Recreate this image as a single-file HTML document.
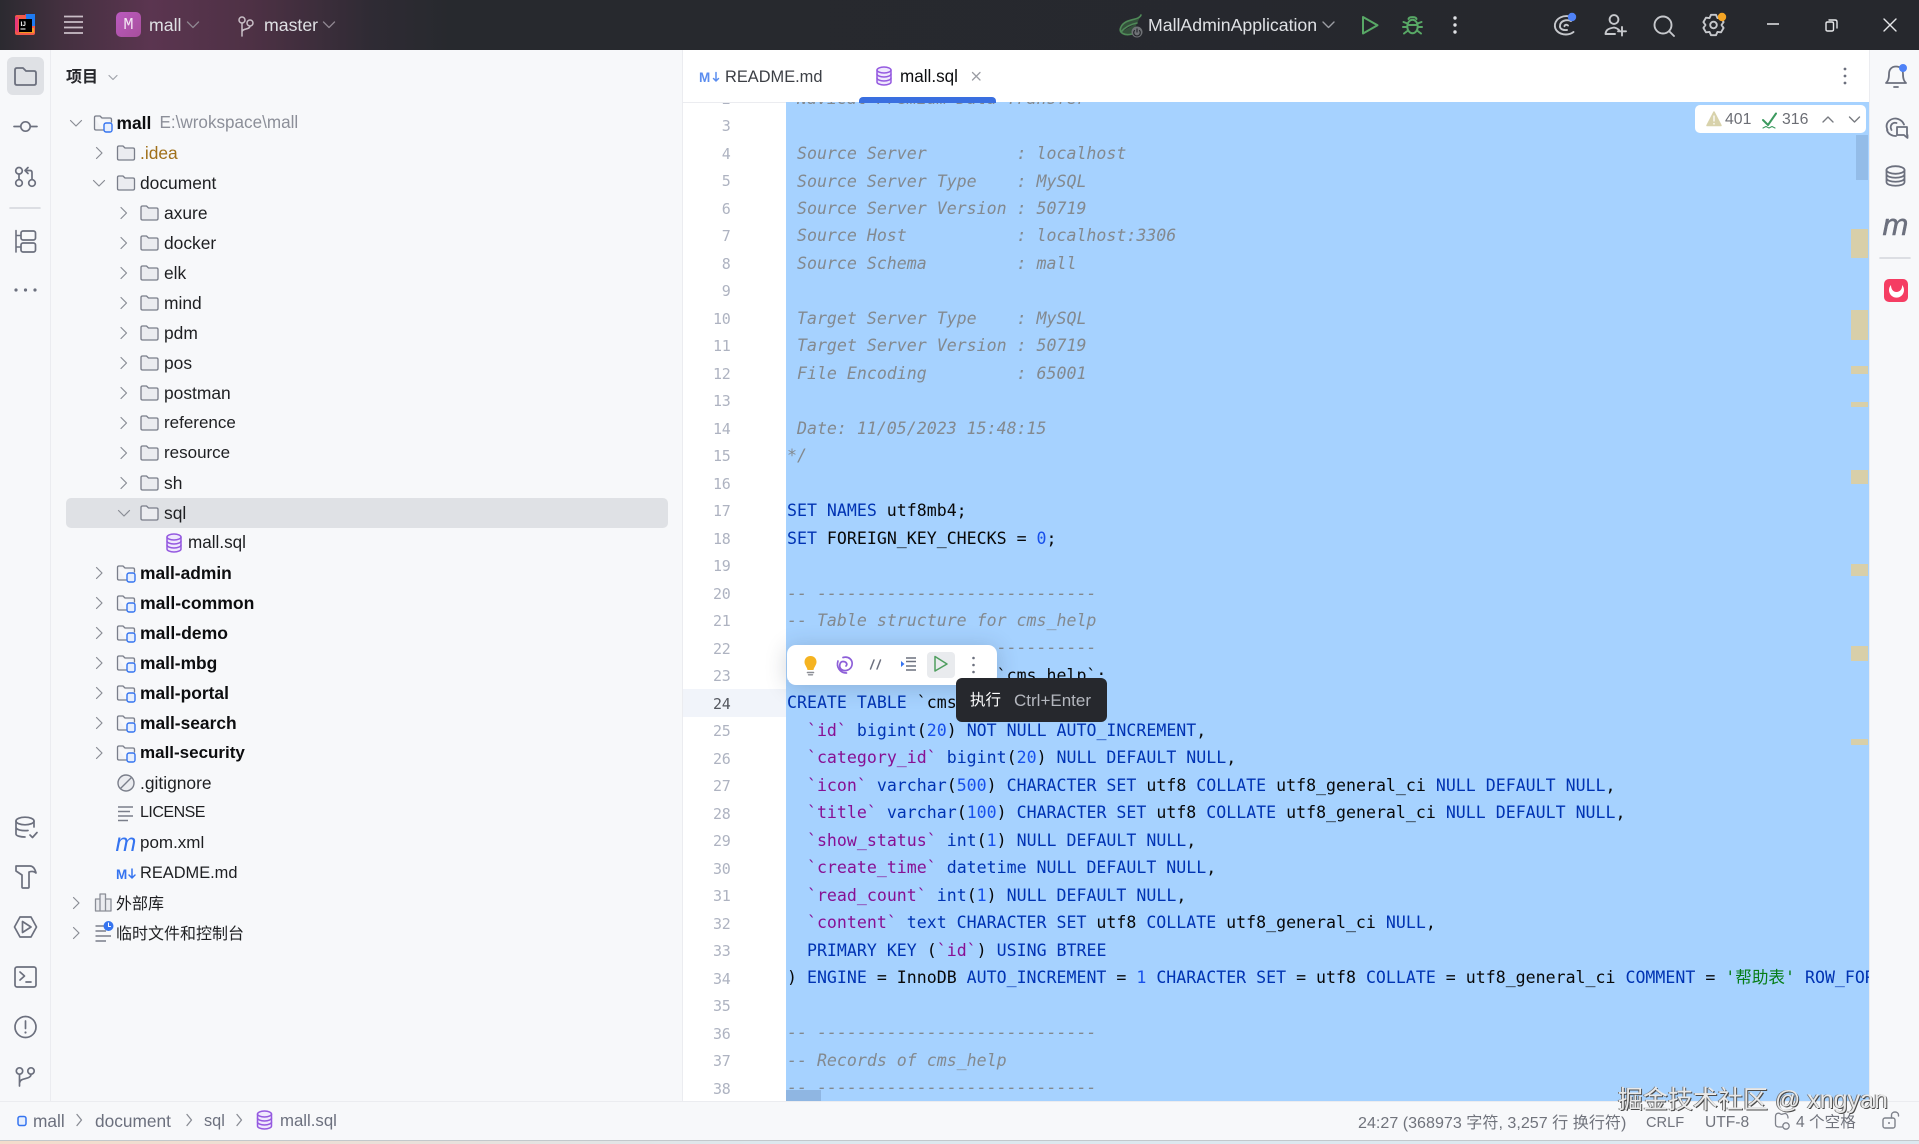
<!DOCTYPE html>
<html lang="zh"><head><meta charset="utf-8"><title>mall</title>
<style>
*{margin:0;padding:0;box-sizing:border-box}
html,body{width:1919px;height:1144px;overflow:hidden;background:#fff;font-family:"Liberation Sans","Noto Sans CJK SC",sans-serif}
.a{position:absolute}
#title{left:0;top:0;width:1919px;height:50px;background:linear-gradient(90deg,#2b2a30 0,#43303f 60px,#5b3550 150px,#4e3145 250px,#2f2b34 370px,#27292e 450px,#26282d 100%)}
.tt{position:absolute;top:0;line-height:50px;font-size:17.7px;color:#dfe1e5;white-space:nowrap}
#tile{left:116px;top:12px;width:25px;height:25px;border-radius:5px;background:linear-gradient(135deg,#bb5abf,#a74f9c);color:#f3e6f3;font:17px/27px "Liberation Mono",monospace;text-align:center}
#ls{left:0;top:50px;width:51px;height:1051px;background:#f7f8fa;border-right:1px solid #ebecf0}
#rs{left:1869px;top:50px;width:50px;height:1051px;background:#f7f8fa;border-left:1px solid #ebecf0}
#tree{left:51px;top:50px;width:632px;height:1051px;background:#f7f8fa;border-right:1px solid #ebecf0}
#tabs{left:683px;top:50px;width:1186px;height:53px;background:#fff;border-bottom:1px solid #ebecf0}
.r{position:absolute;line-height:30px;height:30px;font-size:17.4px;color:#1e1f22;white-space:nowrap}
.r.b{font-weight:700;font-size:17.4px;color:#0c0d0f}
.r .c{font-size:16px}
#gut{left:683px;top:103px;width:103px;height:998px;background:#fff;overflow:hidden}
#cur{left:683px;top:689px;width:103px;height:28px;background:#f1f4fa}
#nums{position:absolute;left:0;top:-17.3px;width:47.5px;text-align:right;font:15px/27.5px "DejaVu Sans Mono",monospace;letter-spacing:-.3px;color:#aeb3c1;white-space:pre}
#ed{left:786px;top:102px;width:1083px;height:999px;background:#a6d2ff;overflow:hidden}
#code{position:absolute;left:1px;top:-16.9px;font:16.58px/27.47px "DejaVu Sans Mono","Noto Sans CJK SC",monospace;color:#080808;white-space:pre}
#code b{color:#0033b3;font-weight:400}
#code u{color:#871094;text-decoration:none}
#code s{color:#1750eb;text-decoration:none}
#code em{color:#067d17;font-style:normal}
#code i{color:#83898f;font-style:italic}
.mk{position:absolute;left:1851px;width:17px;background:#d8cfa9}
#pop{left:787px;top:645px;width:210px;height:40px;background:#fff;border-radius:9px;box-shadow:0 2px 22px rgba(40,50,70,.22)}
#playbg{left:927px;top:652px;width:28px;height:26px;border-radius:4px;background:#e9ebee}
#tip{left:956px;top:678px;width:151px;height:44px;border-radius:6px;background:#26282d;color:#fff;font-size:15.5px;line-height:46px;z-index:5;white-space:nowrap}
#badge{left:1695px;top:105px;width:171px;height:28px;background:#fff;border-radius:5px;font-size:15.8px;color:#6c6e75;line-height:30px}
#st{left:0;top:1101px;width:1919px;height:39px;background:#f7f8fa;border-top:1px solid #ebecf0}
.s{position:absolute;top:1102px;line-height:38px;font-size:17.3px;color:#6c707e;white-space:nowrap}
.q{position:absolute;top:1104px;line-height:38px;font-size:15.6px;color:#70737c;white-space:nowrap}
#bot{left:0;top:1140px;width:1919px;height:4px;background:linear-gradient(90deg,#f4dccb 0,#eadfd8 20%,#dce8ee 40%,#dce9f0 100%);border-top:1px solid #c3c8cc}
#wm{left:1618px;top:1083px;font-size:25px;line-height:34px;color:#e9e9e9;text-shadow:1px 1px 0 #4a4a4a,-1px 0 0 #777;white-space:nowrap;z-index:9}
svg#ov{position:absolute;left:0;top:0;z-index:3}
</style></head><body>

<div class="a" id="title"></div>
<div class="a" id="tile">M</div>
<div class="tt" style="left:149px">mall</div>
<div class="tt" style="left:264px">master</div>
<div class="tt" style="left:1148px">MallAdminApplication</div>

<div class="a" id="ls"></div>
<div class="a" id="rs"></div>
<div class="a" id="tree"></div>
<div class="a" style="left:66px;top:498px;width:602px;height:30px;border-radius:5px;background:#dfe1e5"></div>

<div class="r" style="left:66px;top:63px;font-size:16px;font-weight:700;color:#26272b">项目</div>
<div class="r b" style="left:116.5px;top:108px">mall</div>
<div class="r" style="left:159.5px;top:108px;color:#8c8f99;font-size:17.1px">E:\wrokspace\mall</div>
<div class="r" style="left:140px;top:138px;color:#a0701a">.idea</div>
<div class="r" style="left:140px;top:168px">document</div>
<div class="r" style="left:164px;top:198px">axure</div>
<div class="r" style="left:164px;top:228px">docker</div>
<div class="r" style="left:164px;top:258px">elk</div>
<div class="r" style="left:164px;top:288px">mind</div>
<div class="r" style="left:164px;top:318px">pdm</div>
<div class="r" style="left:164px;top:348px">pos</div>
<div class="r" style="left:164px;top:378px">postman</div>
<div class="r" style="left:164px;top:408px;font-size:17px">reference</div>
<div class="r" style="left:164px;top:438px;font-size:17px">resource</div>
<div class="r" style="left:164px;top:468px">sh</div>
<div class="r" style="left:164px;top:498px">sql</div>
<div class="r" style="left:188px;top:528px;font-size:17.1px">mall.sql</div>
<div class="r b" style="left:140px;top:558px">mall-admin</div>
<div class="r b" style="left:140px;top:588px;font-size:17.6px">mall-common</div>
<div class="r b" style="left:140px;top:618px;font-size:17.6px">mall-demo</div>
<div class="r b" style="left:140px;top:648px">mall-mbg</div>
<div class="r b" style="left:140px;top:678px">mall-portal</div>
<div class="r b" style="left:140px;top:708px">mall-search</div>
<div class="r b" style="left:140px;top:738px;font-size:17px">mall-security</div>
<div class="r" style="left:140px;top:768px">.gitignore</div>
<div class="r" style="left:140px;top:798px;font-size:16px;letter-spacing:-.5px">LICENSE</div>
<div class="r" style="left:140px;top:828px;font-size:17px">pom.xml</div>
<div class="r" style="left:140px;top:858px;font-size:16.4px">README.md</div>
<div class="r" style="left:116px;top:888px"><span class="c">外部库</span></div>
<div class="r" style="left:116px;top:918px"><span class="c">临时文件和控制台</span></div>

<div class="a" id="tabs"></div>
<div class="r" style="left:725px;top:62px;color:#3c3f45;font-size:16.4px">README.md</div>
<div class="r" style="left:900px;top:62px;color:#0c0d0f;font-size:17.1px">mall.sql</div>
<div class="a" style="left:859px;top:97px;width:137px;height:6px;border-radius:4px 4px 0 0;background:#3a6fe0;z-index:2"></div>

<div class="a" id="gut"></div>
<div class="a" id="cur"></div>
<div class="a" style="left:683px;top:103px;width:103px;height:998px;overflow:hidden"><div id="nums">2
3
4
5
6
7
8
9
10
11
12
13
14
15
16
17
18
19
20
21
22
23
<span style="color:#54575f">24</span>
25
26
27
28
29
30
31
32
33
34
35
36
37
38</div></div>

<div class="a" id="ed"><div id="code"><i> Navicat Premium Data Transfer</i>

<i> Source Server         : localhost</i>
<i> Source Server Type    : MySQL</i>
<i> Source Server Version : 50719</i>
<i> Source Host           : localhost:3306</i>
<i> Source Schema         : mall</i>

<i> Target Server Type    : MySQL</i>
<i> Target Server Version : 50719</i>
<i> File Encoding         : 65001</i>

<i> Date: 11/05/2023 15:48:15</i>
<i>*/</i>

<b>SET NAMES</b> utf8mb4;
<b>SET</b> FOREIGN_KEY_CHECKS = <s>0</s>;

<i>-- ----------------------------</i>
<i>-- Table structure for cms_help</i>
<i>-- ----------------------------</i>
<b>DROP TABLE IF EXISTS</b> `cms_help`;
<b>CREATE TABLE</b> `cms_help`  (
  <u>`id`</u> <b>bigint</b>(<s>20</s>) <b>NOT NULL AUTO_INCREMENT</b>,
  <u>`category_id`</u> <b>bigint</b>(<s>20</s>) <b>NULL DEFAULT NULL</b>,
  <u>`icon`</u> <b>varchar</b>(<s>500</s>) <b>CHARACTER SET</b> utf8 <b>COLLATE</b> utf8_general_ci <b>NULL DEFAULT NULL</b>,
  <u>`title`</u> <b>varchar</b>(<s>100</s>) <b>CHARACTER SET</b> utf8 <b>COLLATE</b> utf8_general_ci <b>NULL DEFAULT NULL</b>,
  <u>`show_status`</u> <b>int</b>(<s>1</s>) <b>NULL DEFAULT NULL</b>,
  <u>`create_time`</u> <b>datetime NULL DEFAULT NULL</b>,
  <u>`read_count`</u> <b>int</b>(<s>1</s>) <b>NULL DEFAULT NULL</b>,
  <u>`content`</u> <b>text CHARACTER SET</b> utf8 <b>COLLATE</b> utf8_general_ci <b>NULL</b>,
  <b>PRIMARY KEY</b> (<u>`id`</u>) <b>USING BTREE</b>
) <b>ENGINE</b> = InnoDB <b>AUTO_INCREMENT</b> = <s>1</s> <b>CHARACTER SET</b> = utf8 <b>COLLATE</b> = utf8_general_ci <b>COMMENT</b> = <em>'帮助表'</em> <b>ROW_FORMAT</b> = Dynamic;

<i>-- ----------------------------</i>
<i>-- Records of cms_help</i>
<i>-- ----------------------------</i></div></div>

<div class="mk" style="top:229px;height:29px"></div>
<div class="mk" style="top:310px;height:30px"></div>
<div class="mk" style="top:366px;height:8px"></div>
<div class="mk" style="top:402px;height:5px"></div>
<div class="mk" style="top:470px;height:14px"></div>
<div class="mk" style="top:564px;height:12px"></div>
<div class="mk" style="top:646px;height:15px"></div>
<div class="mk" style="top:739px;height:6px"></div>
<div class="a" style="left:1856px;top:135px;width:12px;height:45px;background:#93bce8"></div>
<div class="a" style="left:786px;top:1090px;width:35px;height:11px;background:#8fb6e2"></div>

<div class="a" id="badge">
<span class="a" style="left:30px">401</span><span class="a" style="left:87px">316</span>
</div>

<div class="a" id="pop"></div>
<div class="a" id="playbg"></div>
<div class="a" id="tip"><span class="a" style="left:14px;font-size:15.5px">执行</span><span class="a" style="left:58px;color:#b4b7be;font-size:17px">Ctrl+Enter</span></div>

<div class="a" id="st"></div>
<div class="s" style="left:33px">mall</div>
<div class="s" style="left:95px">document</div>
<div class="s" style="left:204px;font-size:16.3px">sql</div>
<div class="s" style="left:280px;font-size:16.8px">mall.sql</div>
<div class="q" style="left:1358px;font-size:16.1px">24:27 (368973 字符, 3,257 行 换行符)</div>
<div class="q" style="left:1646px;font-size:14.6px">CRLF</div>
<div class="q" style="left:1705px">UTF-8</div>
<div class="q" style="left:1796px">4 个空格</div>
<div class="a" id="bot"></div>
<div class="a" id="wm">掘金技术社区 @ xngyan</div>

<svg id="ov" width="1919" height="1144" viewBox="0 0 1919 1144" fill="none" stroke-linecap="round" stroke-linejoin="round">
<defs>
<g id="f"><path d="M-8.5-5.5Q-8.5-7-7-7H-3L-1-5H7Q8.5-5 8.5-3.5V5.5Q8.5 7 7 7H-7Q-8.5 7-8.5 5.5Z" fill="#ebecf0" stroke="#7a7e8a" stroke-width="1.3"/></g>
<g id="m"><path d="M-8.5-5.5Q-8.5-7-7-7H-3L-1-5H7Q8.5-5 8.5-3.5V-1M0 7H-7Q-8.5 7-8.5 5.5V-5.5" fill="#f1f2f5" stroke="#7a7e8a" stroke-width="1.3"/><rect x="1" y="0" width="8" height="9" rx="2" fill="#e7effd" stroke="#3574f0" stroke-width="1.4"/></g>
<path id="cr" d="M-2.5-5.5L3 0L-2.5 5.5" stroke="#8a8d95" stroke-width="1.2"/>
<path id="cd" d="M-5.5-2.5L0 3L5.5-2.5" stroke="#8a8d95" stroke-width="1.2"/>
<g id="db" fill="#efe8fd" stroke="#955ae0" stroke-width="1.5"><path d="M-7-6V6A7 3 0 0 0 7 6V-6"/><ellipse cx="0" cy="-6" rx="7" ry="3"/><path d="M-7-2A7 3 0 0 0 7-2M-7 2A7 3 0 0 0 7 2" fill="none"/></g>
</defs>

<!-- title bar left -->
<g>
<rect x="15" y="15" width="20" height="20" rx="2" fill="#f15a4a"/><path d="M15 30V17H18V33ZM25 14H34V24H30Z" fill="#e8387a"/><path d="M26 14H35V26H26Z" fill="#1f7bf2"/><path d="M20 33H34V28H20Z" fill="#f49b22"/>
<rect x="19" y="19" width="13" height="13" fill="#000"/>
<text x="20.5" y="26" font-family="Liberation Sans" font-size="6.5" font-weight="700" fill="#fff">IJ</text><rect x="20.5" y="28.5" width="5" height="1" fill="#fff"/>
<path d="M64 16.500H83M64 22H83M64 27.500H83M64 33H83" stroke="#c9bdc6" stroke-width="1.800" stroke-linecap="butt"/>
<g stroke="#c9bfc7" stroke-width="1.5"><circle cx="242" cy="20" r="3"/><circle cx="250" cy="23" r="3"/><path d="M242 23V36M250 26C250 30 242 28 242 32"/></g>
<path d="M323.5 22L329 27.5L334.5 22M187.5 22L193 27.5L198.5 22" stroke="#8f8690" stroke-width="1.300"/>
</g>
<!-- title bar right -->
<g>
<path d="M1141 15C1139 21 1125 18 1121 27C1118 33 1125 36 1132 34M1121 32C1126 26 1132 24 1137 23" stroke="#4f8a58" stroke-width="1.6" fill="#34503b"/>
<circle cx="1137" cy="32" r="5.5" fill="#6f7276"/><path d="M1137 29V32M1134.5 30.5A3.3 3.3 0 1 0 1139.5 30.5" stroke="#25272c" stroke-width="1.2"/>
<path d="M1323 22L1328.5 27.5L1334 22" stroke="#9b9da3" stroke-width="1.4"/>
<path d="M1363 17V33.5L1377.5 25.3Z" stroke="#58a866" stroke-width="2"/>
<g stroke="#58a866" stroke-width="2"><ellipse cx="1412.5" cy="26.5" rx="5.2" ry="6.8"/><path d="M1408.5 19C1409 16.5 1416 16.5 1416.5 19M1403.5 22L1407.5 23.5M1421.5 22L1417.5 23.5M1403 27H1407M1422 27H1418M1404 33.5L1408 30.5M1421 33.5L1417 30.5M1408 25H1417"/></g>
<g fill="#dfe1e5"><circle cx="1455" cy="18" r="1.7"/><circle cx="1455" cy="25" r="1.7"/><circle cx="1455" cy="32" r="1.7"/></g>
<g stroke="#c6c8cc" stroke-width="1.9">
<path d="M1570 16.500C1563 15 1556.500 18 1555 24C1554 30 1559 34.500 1566 34.500C1569 34.500 1571.500 33.500 1573.500 32M1571 21C1566 19 1560.500 21 1560 25.500C1559.500 29 1563 30.500 1567 30M1568 25.500C1566 24 1564.500 25 1564.500 26.300"/>
<circle cx="1614" cy="19.5" r="4.4"/><path d="M1605.500 34C1606 30 1608 28.500 1614 27.500C1617 28 1618 29 1619 30M1606 34H1615M1622 27V35.500M1618 31.300H1626"/>
<circle cx="1663" cy="25" r="8.5"/><path d="M1669.500 31.500L1674 36"/>
<g transform="translate(1713.500 25)"><path d="M-2.500-10.200H2.500L4-6.900L7.550-7.300L10.100-2.900L8 0L10.100 2.900L7.550 7.300L4 6.900L2.500 10.200H-2.500L-4 6.900L-7.550 7.300L-10.100 2.900L-8 0L-10.100-2.900L-7.550-7.300L-4-6.900Z"/><circle cx="0" cy="0" r="3.300"/></g>
</g>
<circle cx="1572" cy="17" r="4.2" fill="#4f82f7"/>
<circle cx="1722" cy="17" r="4.2" fill="#f5a524"/>
<path d="M1767 24H1779" stroke="#e6e7ea" stroke-width="1.5" stroke-linecap="butt"/>
<path d="M1826 23.5Q1826 22 1827.5 22H1832Q1833.5 22 1833.5 23.5V29.5Q1833.5 31 1832 31H1827.5Q1826 31 1826 29.5ZM1829 20H1835Q1837 20 1837 22V28" stroke="#e6e7ea" stroke-width="1.4"/>
<path d="M1884 19L1896 31M1896 19L1884 31" stroke="#e6e7ea" stroke-width="1.4"/>
</g>

<!-- left strip -->
<rect x="7" y="57" width="37" height="38" rx="6" fill="#dfe1e5"/>
<path d="M15 70Q15 68 17 68H23L26 71H34Q36 71 36 73V83Q36 85 34 85H17Q15 85 15 83Z" stroke="#6c707e" stroke-width="1.8"/>
<g stroke="#6c707e" stroke-width="1.7">
<circle cx="25.500" cy="126.500" r="4.700"/><path d="M14 126.500H20.700M30.300 126.500H37"/>
<circle cx="19" cy="170.800" r="3.300"/><circle cx="19" cy="183" r="3.300"/><circle cx="32" cy="183" r="3.300"/>
<path d="M19 174.100V179.700M32 179.700V172.500Q32 170.500 30 170.500H25.500M28 167.500L25 170.500L28 173.500"/>
<path d="M16 230.500V252M16 235.500H20M16 247H20" stroke-width="1.6"/><rect x="21" y="231" width="14.500" height="9" rx="2"/><rect x="21" y="243" width="14.500" height="9" rx="2"/>
</g>
<path d="M10 208H40" stroke="#d3d5db" stroke-width="1.6"/>
<g fill="#6c707e"><circle cx="16" cy="290" r="1.600"/><circle cx="25.500" cy="290" r="1.600"/><circle cx="35" cy="290" r="1.600"/></g>
<g stroke="#6c707e" stroke-width="1.7">
<ellipse cx="25" cy="821" rx="9" ry="3.800"/><path d="M16 821V834C16 836 21 837 25 837M34 821V827M16 827C16 830 22 831 28 830.500M30 835L32.500 837.500L37 832.500"/>
<path d="M16 866H30C33 866 35 869 36 873C34 871 32 871 29 872V887Q29 888 28 888H23Q22 888 22 887V875L16 871Z"/>
<path d="M20 917H31L36.500 927L31 937H20L14.500 927ZM22.500 921.500V932.500L31 927Z"/>
<rect x="15" y="967" width="21" height="20" rx="2"/><path d="M20 972L24.500 976L20 980M26 982H31"/>
<circle cx="25.500" cy="1027" r="10.500"/><path d="M25.500 1021V1028.500"/>
<circle cx="19.500" cy="1071" r="3.200"/><circle cx="31" cy="1071" r="3.200"/><path d="M19.500 1074.300V1086M31 1074.300C31 1080 20 1077 19.500 1083"/>
</g>
<circle cx="25.500" cy="1032.500" r="1.100" fill="#6c707e"/>

<!-- right strip -->
<g stroke="#6c707e" stroke-width="1.800">
<path d="M1886 83C1888 81 1889 79 1889 74C1889 69 1892 66.500 1896 66.500C1900 66.500 1903 69 1903 74C1903 79 1904 81 1906 83Z"/><path d="M1894 87H1898"/>
<path d="M1887.500 130C1884 122 1892 117 1898 119C1901 120 1903 122 1904 124.500M1891.500 130C1889 125 1893 122 1896.500 123M1896 136C1892 136 1888 134 1887 130"/>
<path d="M1897 127H1907V135H1907.500V138L1904 135H1897Z"/>
<ellipse cx="1895.500" cy="170" rx="9" ry="3.800"/><path d="M1886.500 170V182C1886.500 187 1904.500 187 1904.500 182V170M1886.500 174C1886.500 179 1904.500 179 1904.500 174M1886.500 178C1886.500 183 1904.500 183 1904.500 178"/>
</g>
<circle cx="1903" cy="68" r="4" fill="#4f82f7"/>
<text x="1882.500" y="235" font-family="Liberation Sans" font-size="31" font-style="italic" font-weight="400" fill="#6c707e" stroke="#6c707e" stroke-width=".5">m</text>
<path d="M1880 258H1910" stroke="#d3d5db" stroke-width="1.600"/>
<rect x="1884" y="279" width="24" height="23" rx="5" fill="#f53d63"/>
<path d="M1891 285A7.500 7.500 0 1 0 1902 285C1902.500 289 1900 292 1896.500 292C1893 292 1891 289 1891 285Z" fill="#fff"/>

<!-- tree chevrons/icons -->
<use href="#cd" x="76" y="123"/><use href="#m" x="103" y="123"/>
<use href="#cr" x="99" y="153"/><use href="#f" x="126" y="153"/>
<use href="#cd" x="99" y="183"/><use href="#f" x="126" y="183"/>
<use href="#cr" x="123.500" y="213"/><use href="#f" x="149.500" y="213"/>
<use href="#cr" x="123.500" y="243"/><use href="#f" x="149.500" y="243"/>
<use href="#cr" x="123.500" y="273"/><use href="#f" x="149.500" y="273"/>
<use href="#cr" x="123.500" y="303"/><use href="#f" x="149.500" y="303"/>
<use href="#cr" x="123.500" y="333"/><use href="#f" x="149.500" y="333"/>
<use href="#cr" x="123.500" y="363"/><use href="#f" x="149.500" y="363"/>
<use href="#cr" x="123.500" y="393"/><use href="#f" x="149.500" y="393"/>
<use href="#cr" x="123.500" y="423"/><use href="#f" x="149.500" y="423"/>
<use href="#cr" x="123.500" y="453"/><use href="#f" x="149.500" y="453"/>
<use href="#cr" x="123.500" y="483"/><use href="#f" x="149.500" y="483"/>
<use href="#cd" x="124" y="513"/><use href="#f" x="149.500" y="513"/>
<use href="#db" x="174" y="543"/>
<use href="#cr" x="99" y="573"/><use href="#m" x="126" y="573"/>
<use href="#cr" x="99" y="603"/><use href="#m" x="126" y="603"/>
<use href="#cr" x="99" y="633"/><use href="#m" x="126" y="633"/>
<use href="#cr" x="99" y="663"/><use href="#m" x="126" y="663"/>
<use href="#cr" x="99" y="693"/><use href="#m" x="126" y="693"/>
<use href="#cr" x="99" y="723"/><use href="#m" x="126" y="723"/>
<use href="#cr" x="99" y="753"/><use href="#m" x="126" y="753"/>
<g stroke="#7a7e8a" stroke-width="1.400" fill="#ebecf0"><circle cx="126" cy="783" r="8"/><path d="M120.500 788.500L131.500 777.500"/></g>
<path d="M118 807H133M118 811.500H130M118 816H133M118 820.500H128" stroke="#7a7e8a" stroke-width="1.500" stroke-linecap="butt"/>
<text x="115.500" y="851" font-family="Liberation Sans" font-size="25" font-style="italic" fill="#3574f0">m</text>
<text x="116" y="879" font-family="Liberation Sans" font-size="13.500" font-weight="700" fill="#3574f0">M</text>
<path d="M132 869V878M129 875L132 878L135 875" stroke="#3574f0" stroke-width="1.500"/>
<use href="#cr" x="76" y="903"/>
<path d="M95.500 911V899H100V911M100 911V894H105.500V911M105.500 911V899H111V911H95.500" stroke="#8b8e97" stroke-width="1.300" fill="#ebecf0"/>
<use href="#cr" x="76" y="933"/>
<path d="M95.500 926H106M95.500 931H106M95.500 936H111M95.500 941H106" stroke="#7a7e8a" stroke-width="1.500" stroke-linecap="butt"/>
<circle cx="108.500" cy="926" r="5" fill="#3574f0"/><path d="M108.500 923V926.500H110.500" stroke="#fff" stroke-width="1"/>
<path d="M109 75.500L113 79.500L117 75.500" stroke="#a0a3aa" stroke-width="1.200"/>

<!-- tabs -->
<text x="699" y="82" font-family="Liberation Sans" font-size="13.500" font-weight="700" fill="#5b8def">M</text>
<path d="M716 72.500V81M713.500 78.500L716 81L718.500 78.500" stroke="#5b8def" stroke-width="1.500"/>
<use href="#db" x="884" y="76"/>
<path d="M972.500 72.500L980 80M980 72.500L972.500 80" stroke="#9a9ca3" stroke-width="1.300"/>
<g fill="#6c707e"><circle cx="1845" cy="69" r="1.400"/><circle cx="1845" cy="76" r="1.400"/><circle cx="1845" cy="83" r="1.400"/></g>

<!-- badge icons -->
<path d="M1714 112L1721 125.500H1707Z" fill="#d8d2ab" stroke="#d8d2ab" stroke-width="1.500"/><path d="M1714 116V121M1714 123.500V124" stroke="#fff" stroke-width="1.300"/>
<path d="M1763 120L1768 125L1776 113.500" stroke="#3c9a5f" stroke-width="2"/><path d="M1763 128L1766 126.500L1769 128L1772 126.500L1775 128" stroke="#3c9a5f" stroke-width="1.100"/>
<path d="M1823 122L1828 117L1833 122M1849.500 117L1854.500 122L1859.500 117" stroke="#777a80" stroke-width="1.400"/>

<!-- popup icons -->
<path d="M810.500 656C806.500 656 804.500 659 804.500 662C804.500 665 807 667 807.500 670H813.500C814 667 816.500 665 816.500 662C816.500 659 814.500 656 810.500 656Z" fill="#f5b321"/>
<path d="M807.500 672.500H813.500" stroke="#8a8d94" stroke-width="1.600"/><path d="M808.500 674.800H812.500" stroke="#8a8d94" stroke-width="1.400"/>
<g stroke="#8d5fd8" stroke-width="1.700"><path d="M843 657.500C849 656 853 660 852 665C851 670 845 672 841.500 669.500C838.500 667 839.500 661.500 843 661.500C846 661.500 848 664 846 666M838 661C836 667 840 673 846.500 673"/></g>
<path d="M874 660L870.500 669M880.500 660L877 669" stroke="#6c707e" stroke-width="1.500"/>
<path d="M906 658H916M906 661.500H916M906 666H916M906 670H916" stroke="#6c707e" stroke-width="1.500" stroke-linecap="butt"/><path d="M901 661V667L904.500 664Z" fill="#3574f0"/>
<path d="M935 656.500V671L947 664Z" stroke="#4f9e5f" stroke-width="1.500"/>
<g fill="#6c707e"><circle cx="973.500" cy="658" r="1.300"/><circle cx="973.500" cy="665" r="1.300"/><circle cx="973.500" cy="672" r="1.300"/></g>

<!-- status bar icons -->
<rect x="18" y="1116.500" width="8" height="9" rx="2" stroke="#3574f0" stroke-width="1.500" fill="#e7effd"/>
<path d="M77 1114.500L81.500 1120L77 1125.500M187 1114.500L191.500 1120L187 1125.500M237 1114.500L241.500 1120L237 1125.500" stroke="#8a8d95" stroke-width="1.300"/>
<use href="#db" x="264.500" y="1120"/>
<path d="M1782 1127H1779Q1775.500 1127 1775.500 1124V1116.500C1775.500 1113 1779 1112.500 1780.500 1114C1782 1115 1783 1113.500 1785.500 1113.500C1787 1114 1788 1116 1788 1118" stroke="#7f828b" stroke-width="1.300"/>
<circle cx="1786" cy="1126" r="3.200" stroke="#7f828b" stroke-width="1.300"/>
<rect x="1883" y="1118" width="12" height="10" rx="2" stroke="#7f828b" stroke-width="1.400"/><path d="M1891.500 1118V1115C1891.500 1111 1898.500 1111 1898.500 1115V1116" stroke="#7f828b" stroke-width="1.400"/><circle cx="1889" cy="1123" r="1" fill="#7f828b"/>
</svg>
</body></html>
